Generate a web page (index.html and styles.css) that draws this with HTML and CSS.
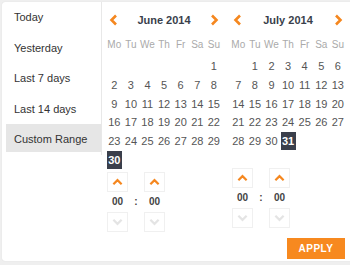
FILE: index.html
```html
<!DOCTYPE html>
<html lang="en">
<head>
    <meta charset="UTF-8">
    <meta name="viewport" content="width=device-width, initial-scale=1.0">
    <link rel="stylesheet" href="styles.css">
    <title>Date range</title>
</head>
<body>
    <div class="picker">
        <div class="main">
            <ul class="ranges">
                <li>Today</li>
                <li>Yesterday</li>
                <li>Last 7 days</li>
                <li>Last 14 days</li>
                <li class="active">Custom Range</li>
            </ul>

            <div class="cal">
                <div class="cal_head">
                    <svg class="arrow" viewBox="0 0 10 12"><polyline points="7,1.5 2.5,6 7,10.5"/></svg>
                    <span class="title">June 2014</span>
                    <svg class="arrow" viewBox="0 0 10 12"><polyline points="3,1.5 7.5,6 3,10.5"/></svg>
                </div>
                <div class="days">
                    <span class="dow">Mo</span><span class="dow">Tu</span><span class="dow">We</span><span class="dow">Th</span><span class="dow">Fr</span><span class="dow">Sa</span><span class="dow">Su</span>
                    <span></span><span></span><span></span><span></span><span></span><span></span><span>1</span>
                    <span>2</span><span>3</span><span>4</span><span>5</span><span>6</span><span>7</span><span>8</span>
                    <span>9</span><span>10</span><span>11</span><span>12</span><span>13</span><span>14</span><span>15</span>
                    <span>16</span><span>17</span><span>18</span><span>19</span><span>20</span><span>21</span><span>22</span>
                    <span>23</span><span>24</span><span>25</span><span>26</span><span>27</span><span>28</span><span>29</span>
                    <span><b class="sel">30</b></span>
                </div>
                <div class="time">
                    <div class="tcol">
                        <div class="tbtn up"><svg viewBox="0 0 12 8"><polyline points="1.5,6.5 6,2 10.5,6.5"/></svg></div>
                        <div class="tval">00</div>
                        <div class="tbtn down"><svg viewBox="0 0 12 8"><polyline points="1.5,1.5 6,6 10.5,1.5"/></svg></div>
                    </div>
                    <div class="colon">:</div>
                    <div class="tcol">
                        <div class="tbtn up"><svg viewBox="0 0 12 8"><polyline points="1.5,6.5 6,2 10.5,6.5"/></svg></div>
                        <div class="tval">00</div>
                        <div class="tbtn down"><svg viewBox="0 0 12 8"><polyline points="1.5,1.5 6,6 10.5,1.5"/></svg></div>
                    </div>
                </div>
            </div>

            <div class="cal">
                <div class="cal_head">
                    <svg class="arrow" viewBox="0 0 10 12"><polyline points="7,1.5 2.5,6 7,10.5"/></svg>
                    <span class="title">July 2014</span>
                    <svg class="arrow" viewBox="0 0 10 12"><polyline points="3,1.5 7.5,6 3,10.5"/></svg>
                </div>
                <div class="days">
                    <span class="dow">Mo</span><span class="dow">Tu</span><span class="dow">We</span><span class="dow">Th</span><span class="dow">Fr</span><span class="dow">Sa</span><span class="dow">Su</span>
                    <span></span><span>1</span><span>2</span><span>3</span><span>4</span><span>5</span><span>6</span>
                    <span>7</span><span>8</span><span>9</span><span>10</span><span>11</span><span>12</span><span>13</span>
                    <span>14</span><span>15</span><span>16</span><span>17</span><span>18</span><span>19</span><span>20</span>
                    <span>21</span><span>22</span><span>23</span><span>24</span><span>25</span><span>26</span><span>27</span>
                    <span>28</span><span>29</span><span>30</span><span><b class="sel">31</b></span>
                </div>
                <div class="time short">
                    <div class="tcol">
                        <div class="tbtn up"><svg viewBox="0 0 12 8"><polyline points="1.5,6.5 6,2 10.5,6.5"/></svg></div>
                        <div class="tval">00</div>
                        <div class="tbtn down"><svg viewBox="0 0 12 8"><polyline points="1.5,1.5 6,6 10.5,1.5"/></svg></div>
                    </div>
                    <div class="colon">:</div>
                    <div class="tcol">
                        <div class="tbtn up"><svg viewBox="0 0 12 8"><polyline points="1.5,6.5 6,2 10.5,6.5"/></svg></div>
                        <div class="tval">00</div>
                        <div class="tbtn down"><svg viewBox="0 0 12 8"><polyline points="1.5,1.5 6,6 10.5,1.5"/></svg></div>
                    </div>
                </div>
            </div>
        </div>

        <div class="footer">
            <button class="apply">APPLY</button>
        </div>
    </div>
</body>
</html>
```

FILE: styles.css
```css
*{
    margin:0;
    padding:0;
    box-sizing: border-box;
}

body{
    background: #efefef;
    height:265px;
    overflow: hidden;
    font-family: "Liberation Sans", Arial, sans-serif;
    color:#333;
}

.picker
{
    margin:2px 0 0 2px;
    width:360px;
    height:259px;
    background:#fff;
    border-radius: 3px;
    box-shadow: 0 0 1px rgba(0,0,0,0.15);
    padding-right:15px;
}

.main
{
    display:flex;
    align-items:flex-start;
    height:232px;
}

.ranges
{
    list-style:none;
    width:96px;
    margin:0 0 0 4px;
    border-right:1px solid #e8e8e8;
    padding:0 0 3px 0;
}

.ranges li
{
    height:28px;
    line-height:30px;
    margin-bottom:2.5px;
    padding-left:8px;
    font-size:11px;
    color:#333;
}

.ranges li:last-child
{
    margin-bottom:0;
}

.ranges li.active
{
    background:#e6e6e6;
}

.cal
{
    width:116px;
    margin-left:4px;
}

.cal + .cal
{
    margin-left:8px;
}

.cal_head
{
    display:flex;
    justify-content:space-between;
    align-items:center;
    height:20px;
    margin-top:8px;
    padding:0 3.3px;
}

.arrow
{
    width:10px;
    height:12px;
    fill:none;
    stroke:#f5871f;
    stroke-width:2.6;
}

.title
{
    font-size:11px;
    font-weight:bold;
    color:#3a3f4b;
}

.days
{
    display:grid;
    grid-template-columns: repeat(7, 16.6px);
    grid-auto-rows:18.7px;
    grid-template-rows:22px;
    margin-top:5px;
    font-size:11px;
    color:#555;
}

.days span
{
    display:flex;
    justify-content:center;
    align-items:center;
}

.days .dow
{
    font-size:10px;
    color:#aaa;
    padding-bottom:4px;
}

.sel
{
    display:flex;
    justify-content:center;
    align-items:center;
    width:15px;
    height:18px;
    background:#3a3f4b;
    color:#fff;
    font-weight:bold;
}

.time
{
    display:flex;
    margin:3px 0 0 1px;
}

.time.short
{
    margin-top:17.5px;
    margin-left:2px;
}

.tcol
{
    width:21px;
}

.tbtn
{
    height:20px;
    border:1px solid #f0f0f0;
    display:flex;
    justify-content:center;
    align-items:center;
}

.tbtn svg
{
    width:11px;
    height:8px;
    fill:none;
    stroke-width:2.4;
}

.up svg{ stroke:#f5871f; }
.down svg{ stroke:#e4e4e4; }

.tval
{
    height:20px;
    line-height:20px;
    text-align:center;
    font-size:10px;
    font-weight:bold;
    color:#444;
}

.colon
{
    width:16px;
    padding-top:20px;
    line-height:20px;
    text-align:center;
    font-size:10px;
    font-weight:bold;
    color:#444;
}

.footer
{
    display:flex;
    justify-content:flex-end;
    padding-right:2px;
    margin-top:4px;
}

.apply
{
    width:58px;
    height:21px;
    background:#f7891f;
    border:none;
    color:#fff;
    font-family: "Liberation Sans", Arial, sans-serif;
    font-size:10px;
    font-weight:bold;
    letter-spacing:0.5px;
}
```
